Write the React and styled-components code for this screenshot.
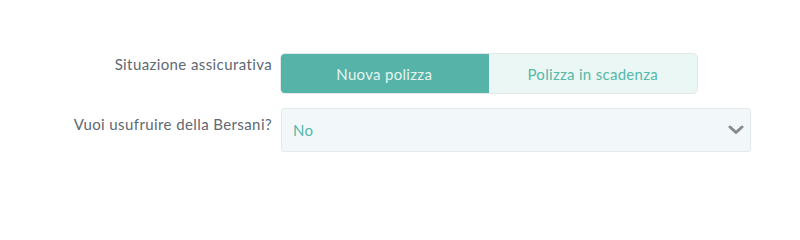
import React, { useState } from "react";
import styled, { createGlobalStyle } from "styled-components";

const GlobalStyle = createGlobalStyle`
  html, body {
    margin: 0;
    padding: 0;
    background: #ffffff;
  }
  body {
    font-family: Lato, "Open Sans", Arial, sans-serif;
  }
`;

const Page = styled.div`
  width: 800px;
  height: 200px;
  box-sizing: border-box;
  padding: 53px 0 0 0;
  display: flex;
  flex-direction: column;
  gap: 14px;
`;

const Row = styled.div`
  display: flex;
  align-items: flex-start;
  gap: 8px;
`;

const Label = styled.div`
  width: 272px;
  flex-shrink: 0;
  text-align: right;
  font-size: 15px;
  letter-spacing: 0.4px;
  line-height: 20px;
  color: #5e6873;
  padding-top: ${({ offset }) => offset}px;
  box-sizing: border-box;
`;

const Toggle = styled.div`
  display: flex;
  width: 418px;
  height: 41px;
  box-sizing: border-box;
  border-radius: 5px;
  overflow: hidden;
  border: 1px solid #e4e9e8;
  background: #ebf7f4;
`;

const ToggleButton = styled.div`
  flex: 1;
  display: flex;
  align-items: center;
  justify-content: center;
  font-size: 15px;
  letter-spacing: 0.3px;
  cursor: pointer;
  color: ${({ active }) => (active ? "#e6f4f1" : "#55b8a9")};
  background: ${({ active }) => (active ? "#55b3a8" : "transparent")};
  margin: ${({ active }) => (active ? "-1px 0 -1px -1px" : "0")};
`;

const Select = styled.div`
  width: 470px;
  height: 44px;
  box-sizing: border-box;
  margin-left: 1px;
  border: 1px solid #e3e8ea;
  border-radius: 3px;
  background: #f2f8fa;
  display: flex;
  align-items: center;
  justify-content: space-between;
  padding: 0 6px 0 11px;
  font-size: 15px;
  letter-spacing: 0.3px;
  color: #55b8a9;
`;

const Chevron = () => (
  <svg width="16" height="10" viewBox="0 0 16 10">
    <path
      d="M2 2 L8 7.5 L14 2"
      fill="none"
      stroke="#8a8a8a"
      strokeWidth="3"
      strokeLinecap="round"
      strokeLinejoin="round"
    />
  </svg>
);

export default function App() {
  const [policy, setPolicy] = useState("nuova");

  return (
    <>
      <GlobalStyle />
      <Page>
        <Row>
          <Label offset={1}>Situazione assicurativa</Label>
          <Toggle>
            <ToggleButton active={policy === "nuova"} onClick={() => setPolicy("nuova")}>
              Nuova polizza
            </ToggleButton>
            <ToggleButton active={policy === "scadenza"} onClick={() => setPolicy("scadenza")}>
              Polizza in scadenza
            </ToggleButton>
          </Toggle>
        </Row>
        <Row>
          <Label offset={6}>Vuoi usufruire della Bersani?</Label>
          <Select>
            <span>No</span>
            <Chevron />
          </Select>
        </Row>
      </Page>
    </>
  );
}
